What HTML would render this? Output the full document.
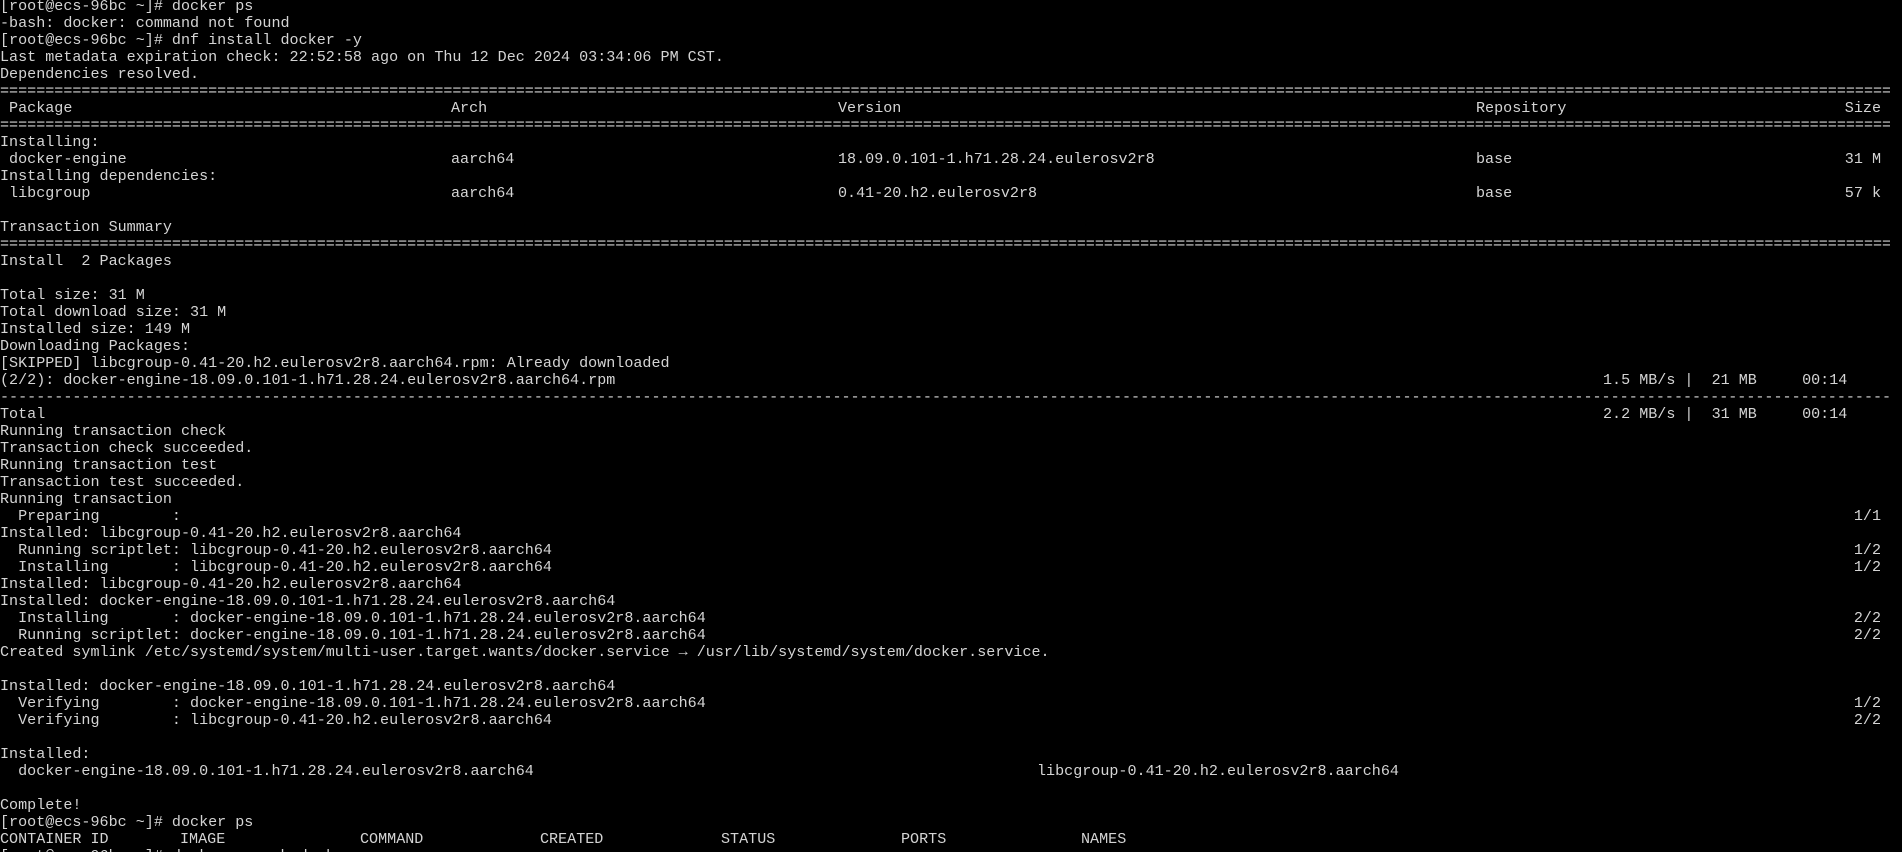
<!DOCTYPE html>
<html><head><meta charset="utf-8"><style>
html,body{margin:0;padding:0;background:#000;width:1902px;height:852px;overflow:hidden}
body{position:relative;font-family:"Liberation Mono",monospace;font-size:15.08px;color:#d4d4d4}
#w{position:absolute;left:0;top:-2px;width:1902px;height:870px}
.l{position:absolute;left:0;height:17px;line-height:17px;white-space:pre;width:1902px}
.l span{position:absolute;top:0;white-space:pre}
.r{right:21px}
.sep{overflow:hidden;width:1890px}
</style></head><body><div id="w">
<div class="l" style="top:0">[root@ecs-96bc ~]# docker ps</div>
<div class="l" style="top:17px">-bash: docker: command not found</div>
<div class="l" style="top:34px">[root@ecs-96bc ~]# dnf install docker -y</div>
<div class="l" style="top:51px">Last metadata expiration check: 22:52:58 ago on Thu 12 Dec 2024 03:34:06 PM CST.</div>
<div class="l" style="top:68px">Dependencies resolved.</div>
<div class="l sep" style="top:85px">=================================================================================================================================================================================================================</div>
<div class="l" style="top:102px"> Package<span style="left:451px">Arch</span><span style="left:838px">Version</span><span style="left:1476px">Repository</span><span class="r">Size</span></div>
<div class="l sep" style="top:119px">=================================================================================================================================================================================================================</div>
<div class="l" style="top:136px">Installing:</div>
<div class="l" style="top:153px"> docker-engine<span style="left:451px">aarch64</span><span style="left:838px">18.09.0.101-1.h71.28.24.eulerosv2r8</span><span style="left:1476px">base</span><span class="r">31 M</span></div>
<div class="l" style="top:170px">Installing dependencies:</div>
<div class="l" style="top:187px"> libcgroup<span style="left:451px">aarch64</span><span style="left:838px">0.41-20.h2.eulerosv2r8</span><span style="left:1476px">base</span><span class="r">57 k</span></div>
<div class="l" style="top:221px">Transaction Summary</div>
<div class="l sep" style="top:238px">=================================================================================================================================================================================================================</div>
<div class="l" style="top:255px">Install  2 Packages</div>
<div class="l" style="top:289px">Total size: 31 M</div>
<div class="l" style="top:306px">Total download size: 31 M</div>
<div class="l" style="top:323px">Installed size: 149 M</div>
<div class="l" style="top:340px">Downloading Packages:</div>
<div class="l" style="top:357px">[SKIPPED] libcgroup-0.41-20.h2.eulerosv2r8.aarch64.rpm: Already downloaded</div>
<div class="l" style="top:374px">(2/2): docker-engine-18.09.0.101-1.h71.28.24.eulerosv2r8.aarch64.rpm<span style="left:1603px">1.5 MB/s |  21 MB     00:14</span></div>
<div class="l sep" style="top:391px">-----------------------------------------------------------------------------------------------------------------------------------------------------------------------------------------------------------------</div>
<div class="l" style="top:408px">Total<span style="left:1603px">2.2 MB/s |  31 MB     00:14</span></div>
<div class="l" style="top:425px">Running transaction check</div>
<div class="l" style="top:442px">Transaction check succeeded.</div>
<div class="l" style="top:459px">Running transaction test</div>
<div class="l" style="top:476px">Transaction test succeeded.</div>
<div class="l" style="top:493px">Running transaction</div>
<div class="l" style="top:510px">  Preparing        :<span class="r">1/1</span></div>
<div class="l" style="top:527px">Installed: libcgroup-0.41-20.h2.eulerosv2r8.aarch64</div>
<div class="l" style="top:544px">  Running scriptlet: libcgroup-0.41-20.h2.eulerosv2r8.aarch64<span class="r">1/2</span></div>
<div class="l" style="top:561px">  Installing       : libcgroup-0.41-20.h2.eulerosv2r8.aarch64<span class="r">1/2</span></div>
<div class="l" style="top:578px">Installed: libcgroup-0.41-20.h2.eulerosv2r8.aarch64</div>
<div class="l" style="top:595px">Installed: docker-engine-18.09.0.101-1.h71.28.24.eulerosv2r8.aarch64</div>
<div class="l" style="top:612px">  Installing       : docker-engine-18.09.0.101-1.h71.28.24.eulerosv2r8.aarch64<span class="r">2/2</span></div>
<div class="l" style="top:629px">  Running scriptlet: docker-engine-18.09.0.101-1.h71.28.24.eulerosv2r8.aarch64<span class="r">2/2</span></div>
<div class="l" style="top:646px">Created symlink /etc/systemd/system/multi-user.target.wants/docker.service → /usr/lib/systemd/system/docker.service.</div>
<div class="l" style="top:680px">Installed: docker-engine-18.09.0.101-1.h71.28.24.eulerosv2r8.aarch64</div>
<div class="l" style="top:697px">  Verifying        : docker-engine-18.09.0.101-1.h71.28.24.eulerosv2r8.aarch64<span class="r">1/2</span></div>
<div class="l" style="top:714px">  Verifying        : libcgroup-0.41-20.h2.eulerosv2r8.aarch64<span class="r">2/2</span></div>
<div class="l" style="top:748px">Installed:</div>
<div class="l" style="top:765px">  docker-engine-18.09.0.101-1.h71.28.24.eulerosv2r8.aarch64<span style="left:1037px">libcgroup-0.41-20.h2.eulerosv2r8.aarch64</span></div>
<div class="l" style="top:799px">Complete!</div>
<div class="l" style="top:816px">[root@ecs-96bc ~]# docker ps</div>
<div class="l" style="top:833px">CONTAINER ID<span style="left:180px">IMAGE</span><span style="left:360px">COMMAND</span><span style="left:540px">CREATED</span><span style="left:721px">STATUS</span><span style="left:901px">PORTS</span><span style="left:1081px">NAMES</span></div>
<div class="l" style="top:850px">[root@ecs-96bc ~]# docker search docker</div>
</div></body></html>
